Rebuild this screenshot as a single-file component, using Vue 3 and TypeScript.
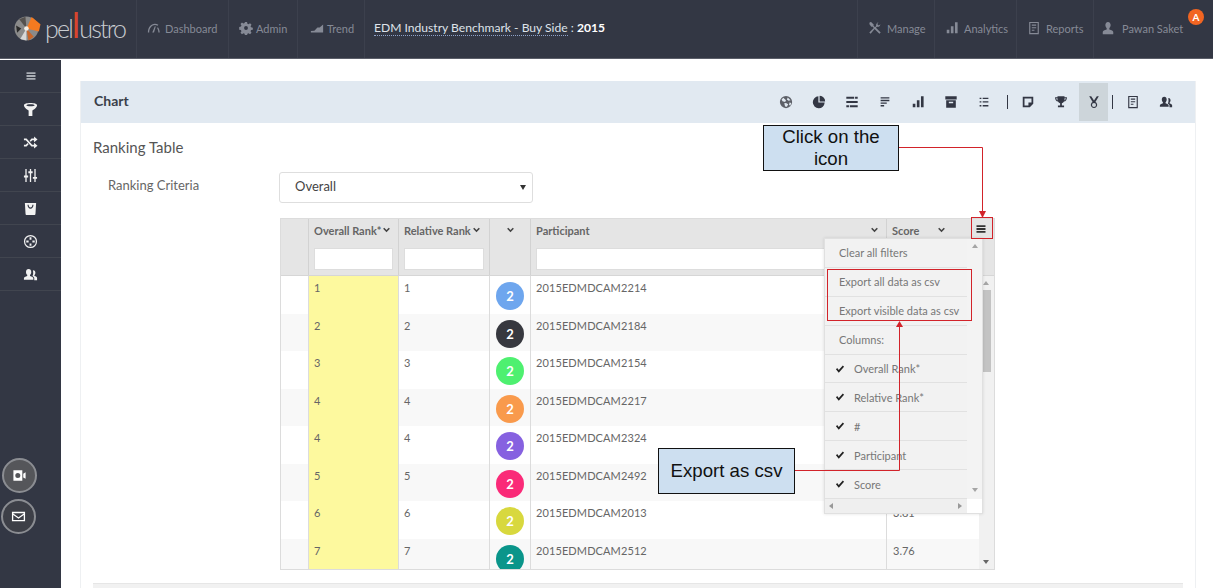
<script setup lang="ts">
const I: Record<string, string> = {
  menu: 'M2 3h12v2.4H2zM2 6.8h12v2.4H2zM2 10.6h12v2.4H2z',
  funnel: 'M1 3.5C1 1.8 4 1 8 1s7 .8 7 2.5c0 2-3 4.6-5 5.6V15H6V9.1C4 8.1 1 5.5 1 3.5zM3.6 3.5c0 .6 2 1.1 4.4 1.1s4.4-.5 4.4-1.1S10.400 2.400 8 2.400 3.600 2.900 3.600 3.500z',
  shuffle: 'M1 3.800h2.800l6 6.700h2V8.300L15.500 11.400l-3.700 3.100v-2.200H9L3 5.600H1zM1 10.500h2l1.800-2 1.200 1.300-2.200 2.500H1zM9 3.800h2.800V1.600l3.700 3.100-3.700 3.100V5.600h-2L8.300 7.300 7.100 6z',
  sliders: 'M2.500 1h1.400v7H5.500v2H3.900v5H2.500v-5H1V8h1.500zM7.300 1h1.400v2.500h1.600v2H8.700V15H7.300V5.500H5.700v-2h1.600zM12.100 1h1.400v8.500H15v2h-1.500V15h-1.400v-3.500h-1.600v-2h1.600z',
  bag: 'M2 2h12l-.7 11.500c0 .8-.5 1.500-1.300 1.500H4c-.8 0-1.300-.7-1.300-1.500zM4.800 4c0 2.400 1.400 4.200 3.200 4.200S11.200 6.400 11.200 4H10c0 1.600-.9 3-2 3S6 5.600 6 4z',
  target: 'M8 1a7 7 0 1 1 0 14A7 7 0 0 1 8 1zM8 2.300a5.700 5.700 0 1 0 0 11.400A5.700 5.700 0 0 0 8 2.300zM7 3.500h2V6H7zM3.500 7H6v2H3.500zM10 7h2.500v2H10zM7 10h2v2.500H7z',
  users: 'M6 2c1.800 0 2.800 1.400 2.800 3.200 0 1.300-.5 2.500-1.300 3.100v1.200c2 .6 3.500 1.300 3.500 2.500v1.500H1V12c0-1.200 1.500-1.900 3.500-2.500V8.300C3.700 7.700 3.200 6.500 3.200 5.200 3.200 3.400 4.200 2 6 2zM11 3.500c1.400 0 2.200 1.200 2.200 2.600 0 1-.4 2-1 2.500v1c1.600.5 2.800 1 2.800 2.100V14h-3v-2c0-1-.8-1.800-2-2.400.8-1 1.200-2.900.6-6z',
  video: 'M1.500 2.500h9.500v11H1.500zM6.200 5.300a2.700 2.700 0 1 0 0 5.400 2.700 2.700 0 0 0 0-5.400zM12 6 14.500 4.500v7L12 10z',
  mail: 'M1 3h14v10H1zM2.400 4.400v.4L8 8.800l5.600-4V4.400zM2.400 6.500v5.100h11.200V6.500L8 10.500z',
  gauge: 'M1 13C1 7.500 4.500 3 9 3c1.500 0 2.800.5 4 1.300l-1 1C11.100 4.800 10 4.500 9 4.500 5.500 4.500 2.500 8.300 2.500 13zM6 13l3-7 1 .4L8 13zM12.500 7c1 1.500 2 3.500 2 6H13c0-2-.7-3.800-1.500-5z',
  gear: 'M6.800 1h2.400l.4 2 1.300.6 1.700-1.100 1.700 1.700-1.100 1.700.6 1.300 2 .4v2.400l-2 .4-.6 1.300 1.100 1.700-1.700 1.700-1.700-1.100-1.300.6-.4 2H6.800l-.4-2-1.300-.6-1.700 1.100-1.700-1.700 1.100-1.700-.6-1.300-2-.4V6.800l2-.4.6-1.300-1.100-1.700 1.700-1.700 1.700 1.100 1.300-.6zM8 5.800a2.200 2.200 0 1 0 0 4.400 2.200 2.200 0 0 0 0-4.400z',
  trend: 'M1 13h14V4l-4 3.500H8.500L5 11 1 11.500z',
  tools: 'M2 1.500l1.500-.5 3 3-.2 1.300 1.700 1.700L9.300 5.700C9 4 10 2 12 1.500l-1.500 2 1.700 1.700 2-1.500c-.3 2.200-2.200 3.500-4 2.800L9 7.700l5.500 5.500-1.500 1.500L7.500 9.200 3 14.500l-1.500-1.500L6.700 8 5 6.300l-1.300.2-2.200-3z',
  bars: 'M2 10h3v4H2zM6.700 6h3v8h-3zM11.400 1.500h3V14h-3z',
  report: 'M2.500 1h11v14h-11zM3.800 2.300v11.400h8.400V2.300zM5.500 4h5v1.400h-5zM5.500 7h5v1.200h-5zM5.500 10h3v1.200h-3z',
  user: 'M8 1c2 0 3 1.500 3 3.600 0 1.500-.6 2.900-1.500 3.600v1.400c2.500.6 4.500 1.500 4.500 3V15H2v-2.400c0-1.500 2-2.400 4.500-3V8.200C5.600 7.500 5 6.100 5 4.600 5 2.500 6 1 8 1z',
  globe: 'M8 1a7 7 0 1 1 0 14A7 7 0 0 1 8 1zM5 3l-2 2 1 2 3 1 1-2zM10 2.800 9 5l2 1.500 2.200-.5zM8 9l-2 .5L7 13l2 .5 1.500-3zM12 8.500l-.5 3 1.500.5 1-3z',
  pie: 'M7.300 1.500v7.200h7.200A6.800 6.800 0 1 1 7.300 1.500zM8.700 1A6 6 0 0 1 15 7.300H8.700z',
  lines: 'M1.500 2h9v2.200h-9zM11.500 2h3v2.200h-3zM1.500 6.900h13v2.200h-13zM1.500 11.800h3v2.200h-3zM5.500 11.800h9v2.200h-9z',
  align: 'M3 2.500h10v1.500H3zM3 5.500h10v1.500H3zM3 8.500h7v1.500H3zM3 11.500h4V13H3z',
  archive: 'M1.500 1.500h13V5h-13zM2.500 6h11v8.500h-11zM5.500 7.800v1.500h5V7.800z',
  list: 'M3 3h2v1.500H3zM6.500 3H13v1.500H6.500zM3 7.200h2v1.500H3zM6.500 7.200H13v1.500H6.500zM3 11.500h2V13H3zM6.500 11.500H13V13H6.500z',
  note: 'M2 2h12v8l-4 4H2zM4 4v8h4.500v-3.500H12V4z',
  trophy: 'M4 1.500h8v1h2.800c0 3-1.300 4.600-3.400 5C10.700 8.700 9.700 9.300 9 9.500V12h2.500v2h-7v-2H7V9.500c-.7-.2-1.700-.8-2.400-2C2.500 7.100 1.200 5.500 1.200 2.500H4zM2.500 3.800c.1 1.200.6 2 1.500 2.400-.1-.8-.1-1.600 0-2.400zM12 3.800c.1.800.1 1.600 0 2.400.9-.4 1.400-1.200 1.500-2.400z',
  medal: 'M2.500 1.500h2.300L8 6.200l3.200-4.700h2.300L9.600 8a3.600 3.600 0 1 1-3.200 0zM8 9.200a2.300 2.300 0 1 0 0 4.600 2.300 2.300 0 0 0 0-4.600z',
  check: 'M1.500 8.500 3.500 6.500 6 9.500 12.500 2.500 14.500 4.500 6 14z',
  chev: 'M2 5l2-2 4 4 4-4 2 2-6 6z'
}

const sideIcons = ['funnel', 'shuffle', 'sliders', 'bag', 'target', 'users']
const toolsA = ['globe', 'pie', 'lines', 'align', 'bars', 'archive', 'list']
const toolsB = ['note', 'trophy', 'medal']
const toolsC = ['report', 'users']

interface Row { overall: number; relative: number; color: string; id: string; score: string }
const rows: Row[] = [
  { overall: 1, relative: 1, color: '#6ea6ee', id: '2015EDMDCAM2214', score: '' },
  { overall: 2, relative: 2, color: '#37383f', id: '2015EDMDCAM2184', score: '' },
  { overall: 3, relative: 3, color: '#4ef070', id: '2015EDMDCAM2154', score: '' },
  { overall: 4, relative: 4, color: '#f99a4c', id: '2015EDMDCAM2217', score: '' },
  { overall: 4, relative: 4, color: '#8661e0', id: '2015EDMDCAM2324', score: '' },
  { overall: 5, relative: 5, color: '#fa2a78', id: '2015EDMDCAM2492', score: '' },
  { overall: 6, relative: 6, color: '#d8d83e', id: '2015EDMDCAM2013', score: '3.81' },
  { overall: 7, relative: 7, color: '#0a958a', id: '2015EDMDCAM2512', score: '3.76' }
]
const columnsList = ['Overall Rank*', 'Relative Rank*', '#', 'Participant', 'Score']
</script>

<template>
  <div class="app">
    <header class="top">
      <div class="logo">
        <svg class="logo-mark" viewBox="0 0 26 24">
          <circle cx="12" cy="12" r="11.500" fill="#8a8a8a" />
          <path d="M12 12 17 1 25.500 8 24 15z" fill="#f47a20" />
          <path d="M12 12 5 3 11 .8z" fill="#55514e" />
          <path d="M12 12 12 23.500 6 22z" fill="#d8d8d8" />
          <path d="M12 12 19 20 14 23.500z" fill="#c9662a" />
          <path d="M2 9l5 3-4 4z" fill="#2a2a2a" />
          <circle cx="12" cy="12" r="2.200" fill="#f4efe6" />
        </svg>
        <span class="logo-text">pel<i class="l-red">l</i>ustro</span>
      </div>
      <nav class="nav">
        <a class="nav-item nav-dash"><svg class="ic13" viewBox="0 0 16 16"><path :d="I.gauge" /></svg>Dashboard</a>
        <a class="nav-item nav-admin"><svg class="ic13" viewBox="0 0 16 16"><path :d="I.gear" /></svg>Admin</a>
        <a class="nav-item nav-trend"><svg class="ic13" viewBox="0 0 16 16"><path :d="I.trend" /></svg>Trend</a>
      </nav>
      <div class="title"><span class="title-name">EDM Industry Benchmark - Buy Side</span> : <b>2015</b></div>
      <nav class="nav nav-right">
        <a class="nav-item nav-r1"><svg class="ic13" viewBox="0 0 16 16"><path :d="I.tools" /></svg>Manage</a>
        <a class="nav-item nav-r2"><svg class="ic13" viewBox="0 0 16 16"><path :d="I.bars" /></svg>Analytics</a>
        <a class="nav-item nav-r3"><svg class="ic13" viewBox="0 0 16 16"><path :d="I.report" /></svg>Reports</a>
        <a class="nav-item nav-r4"><svg class="ic13" viewBox="0 0 16 16"><path :d="I.user" /></svg>Pawan Saket</a>
      </nav>
      <span class="badge">A</span>
    </header>

    <div class="page">
      <aside class="side">
        <div class="side-item side-menu"><svg viewBox="0 0 16 16"><path :d="I.menu" /></svg></div>
        <div v-for="s in sideIcons" :key="s" class="side-item">
          <svg viewBox="0 0 16 16"><path :d="I[s]" fill-rule="evenodd" /></svg>
        </div>
        <div class="side-round">
          <span class="round round-video"><svg viewBox="0 0 16 16"><path :d="I.video" fill-rule="evenodd" /></svg></span>
          <span class="round"><svg viewBox="0 0 16 16"><path :d="I.mail" fill-rule="evenodd" /></svg></span>
        </div>
      </aside>

      <main class="main">
        <section class="card">
          <div class="card-head">
            <h2>Chart</h2>
            <div class="tools">
              <span v-for="t in toolsA" :key="t" class="tool" :class="{ soft: t === 'globe' }"><svg viewBox="0 0 16 16"><path :d="I[t]" fill-rule="evenodd" /></svg></span>
              <span class="tool-sep"></span>
              <span v-for="t in toolsB" :key="t" class="tool" :class="{ active: t === 'medal' }"><svg viewBox="0 0 16 16"><path :d="I[t]" fill-rule="evenodd" /></svg></span>
              <span class="tool-sep tool-sep2"></span>
              <span v-for="t in toolsC" :key="t + 'c'" class="tool"><svg viewBox="0 0 16 16"><path :d="I[t]" fill-rule="evenodd" /></svg></span>
            </div>
          </div>
          <div class="card-body">
            <h3>Ranking Table</h3>
            <div class="criteria">
              <label>Ranking Criteria</label>
              <div class="select">Overall<span class="caret"></span></div>
            </div>

            <div class="grid">
              <div class="g-head">
                <div class="hc"></div>
                <div class="hc"><div class="ht">Overall Rank*<svg class="chev chev-tight" viewBox="0 0 16 16"><path :d="I.chev" /></svg></div><div class="filter"></div></div>
                <div class="hc"><div class="ht">Relative Rank<svg class="chev chev-tight" viewBox="0 0 16 16"><path :d="I.chev" /></svg></div><div class="filter"></div></div>
                <div class="hc hc-center"><div class="ht"><svg class="chev" viewBox="0 0 16 16"><path :d="I.chev" /></svg></div></div>
                <div class="hc"><div class="ht ht-between"><span>Participant</span><svg class="chev" viewBox="0 0 16 16"><path :d="I.chev" /></svg></div><div class="filter"></div></div>
                <div class="hc"><div class="ht ht-score"><span>Score</span><svg class="chev" viewBox="0 0 16 16"><path :d="I.chev" /></svg></div></div>
                <div class="hc-end"></div>
              </div>
              <div class="g-body">
                <div class="g-rows">
                  <div v-for="(r, i) in rows" :key="i" class="row" :class="{ odd: i % 2 === 1 }">
                    <div class="c"></div>
                    <div class="c c-y">{{ r.overall }}</div>
                    <div class="c">{{ r.relative }}</div>
                    <div class="c c-av"><span class="avatar" :style="{ background: r.color }">2</span></div>
                    <div class="c c-id">{{ r.id }}</div>
                    <div class="c c-score">{{ r.score }}</div>
                  </div>
                </div>
                <div class="vbar">
                  <span class="arrow-up"></span>
                  <span class="thumb"></span>
                  <span class="arrow-down"></span>
                </div>
              </div>

              <button class="g-menu-btn" type="button" aria-label="Grid menu"><svg viewBox="0 0 16 16"><path :d="I.menu" /></svg></button>

              <div class="menu">
                <div class="menu-main">
                  <ul class="menu-list">
                    <li>Clear all filters</li>
                    <li>Export all data as csv</li>
                    <li>Export visible data as csv</li>
                    <li>Columns:</li>
                    <li v-for="c in columnsList" :key="c" class="m-col"><svg viewBox="0 0 16 16"><path :d="I.check" /></svg>{{ c }}</li>
                  </ul>
                  <div class="menu-v"><span class="arrow-up"></span><span class="arrow-down"></span></div>
                </div>
                <div class="menu-h"><span class="arrow-left"></span><span class="arrow-right"></span><span class="corner"></span></div>
              </div>
            </div>
            <div class="foot-bar"></div>
          </div>
        </section>
      </main>
    </div>

    <svg class="wires" viewBox="0 0 1213 588">
      <g fill="none" stroke="#d2232a" stroke-width="1">
        <path d="M898.500 147.500H982.500V212" />
        <path d="M795 470.500H899.500V326" />
        <rect x="971.500" y="217.500" width="21" height="21" />
        <rect x="827.500" y="269.500" width="144" height="51" />
      </g>
      <path d="M979 211h7l-3.500 7z" fill="#d2232a" />
      <path d="M896 327h7l-3.500-6z" fill="#d2232a" />
    </svg>
    <div class="callout callout-click">Click on the icon</div>
    <div class="callout callout-export">Export as csv</div>
  </div>
</template>

<style>
html, body { margin: 0; background: #fff; }
</style>

<style scoped>
* { box-sizing: border-box; }
.app {
  position: relative; width: 1213px; height: 588px; overflow: hidden;
  font-family: Lato, "Open Sans", sans-serif; color: #6f6f6f; background: #fff;
  display: flex; flex-direction: column;
}
svg { fill: currentColor; display: block; }

/* header */
.top { height: 59px; flex: none; display: flex; align-items: stretch; background: #333744; border-bottom: 1px solid #5b5e69; position: relative; }
.logo { width: 136px; display: flex; align-items: center; padding-left: 14px; gap: 4px; padding-bottom: 2px; }
.logo-mark { width: 27px; height: 25px; fill: none; flex: none; }
.logo-text { font-size: 25px; font-weight: 300; color: #c9ccd1; letter-spacing: -1.800px; line-height: 1; white-space: nowrap; }
.logo-text i { font-style: normal; }
.l-red { color: #d8452e; font-size: 34px; line-height: 20px; font-weight: 400; margin: 0 1px 0 0; }
.nav { display: flex; align-items: stretch; }
.nav-item { display: flex; align-items: center; gap: 5px; font-size: 11px; color: #868a96; border-left: 1px solid #3c404d; padding: 0 0 2px 10px; white-space: nowrap; }
.ic13 { width: 14px; height: 14px; flex: none; }
.nav-dash { width: 92px; gap: 4px; }
.nav-admin { width: 69px; gap: 3px; }
.nav-trend { width: 67px; padding-left: 12px; gap: 3px; }
.title { padding: 0 0 3px 9px; border-left: 1px solid #3c404d; display: flex; align-items: center; font-size: 12.100px; color: #dfe3ea; white-space: pre; }
.title b { color: #fff; font-weight: 700; }
.title-name { border-bottom: 1px dotted #8fa2c9; line-height: 15px; }
.nav-right { margin-left: auto; padding-right: 30px; }
.nav-r1 { width: 77px; }
.nav-r2 { width: 82px; }
.nav-r3 { width: 77px; }
.nav-r4 { width: 90px; padding-left: 7px; gap: 7px; }
.badge { position: absolute; left: 1188px; top: 9px; width: 16px; height: 16px; border-radius: 50%; background: #f26522; color: #fff; font-size: 10px; font-weight: 700; text-align: center; line-height: 16px; }

.page { flex: 1; display: flex; min-height: 0; margin-top: 1px; }

/* sidebar */
.side { width: 61px; flex: none; background: #333744; display: flex; flex-direction: column; padding-bottom: 54px; }
.side-item { height: 33px; flex: none; display: flex; align-items: center; justify-content: center; border-bottom: 1px solid #41454f; color: #f2f2f2; }
.side-item svg { width: 15px; height: 15px; }
.side-menu { color: #aaaeb5; }
.side-menu svg { width: 12px; height: 12px; }
.side-round { margin-top: auto; padding-left: 1px; display: flex; flex-direction: column; gap: 6px; }
.round { width: 35px; height: 35px; border-radius: 50%; background: #3d3f47; border: 2px solid #8b8d92; display: flex; align-items: center; justify-content: center; color: #fff; }
.round svg { width: 15px; height: 15px; }
.round-video { margin-left: 1px; background: #55565a; }

/* main */
.main { flex: 1; min-width: 0; padding: 21px 17px 0 19px; }
.card { border: 1px solid #eef0f2; border-top: 0; height: 540px; }
.card-head { height: 42px; background: #e1e9f1; display: flex; align-items: center; justify-content: space-between; padding: 0 13px 0 13px; }
.card-head h2 { margin: 0 0 4px; font-size: 14px; font-weight: 700; color: #3b3f4a; }
.tools { display: flex; align-items: center; height: 42px; color: #333744; }
.tool { width: 33px; height: 38px; display: flex; align-items: center; justify-content: center; }
.tool svg { width: 14px; height: 14px; }
.tool.soft { color: #5d6068; }
.tool.active { background: #cdd5da; width: 29px; margin: 0 2px; }
.tool-sep { width: 1px; height: 14px; background: #333744; margin: 0 3px 0 7px; }
.tool-sep2 { margin: 0 3px 0 2px; }
.card-body { padding: 14px 12px 0; }
.card-body h3 { margin: 0; font-size: 15px; font-weight: 400; line-height: 20px; color: #555; }
.criteria { display: flex; align-items: center; margin-top: 15px; height: 31px; }
.criteria label { width: 186px; padding: 0 0 5px 15px; font-size: 13px; color: #666; flex: none; }
.select { width: 254px; height: 31px; border: 1px solid #dedede; border-radius: 3px; padding-left: 15px; font-size: 13px; line-height: 27px; color: #444; position: relative; }
.caret { position: absolute; right: 6px; top: 12px; border: 3.500px solid transparent; border-top: 5px solid #333; border-bottom: 0; }

/* grid */
.grid { position: relative; margin: 15px 0 0 187px; width: 715px; height: 352px; border: 1px solid #dcdcdc; }
.g-head { height: 57px; display: grid; grid-template-columns: 28px 90px 91px 41px 356px 1fr 22px; background: #e5e5e5; border-bottom: 1px solid #d6d6d6; }
.hc { border-right: 1px solid #d2d2d2; padding: 0 5px; min-width: 0; }
.hc-center { padding: 0; }
.hc-end { background: #e5e5e5; }
.ht { height: 22px; display: flex; align-items: center; font-size: 11px; font-weight: 700; color: #666; white-space: nowrap; }
.hc-center .ht { justify-content: center; }
.ht-between { justify-content: space-between; padding-right: 2px; }
.ht-score { gap: 18px; padding-left: 0; }
.chev { width: 9px; height: 9px; color: #444; flex: none; }
.chev-tight { margin-left: 1px; }
.filter { height: 22px; background: #fff; border: 1px solid #ddd; margin-top: 7px; }
.g-body { display: flex; height: 293px; overflow: hidden; }
.g-rows { flex: 1; min-width: 0; }
.row { display: grid; grid-template-columns: 28px 90px 91px 41px 356px 1fr; height: 37.500px; background: #fff; }
.row.odd { background: #f8f8f8; }
.c { border-right: 1px solid #dcdcdc; padding: 5px 0 0 5px; font-size: 11px; line-height: 14px; color: #666; overflow: hidden; }
.c-y { background: #fdf99e; }
.c-av { padding: 6px 0 0 6px; }
.c-id { letter-spacing: .1px; }
.c-score { border-right: 0; padding-left: 6px; }
.avatar { display: block; width: 28px; height: 28px; border-radius: 50%; color: #fff; font-size: 13px; font-weight: 700; line-height: 28px; text-align: center; }
.vbar { width: 15px; flex: none; background: #f1f1f1; position: relative; }
.thumb { position: absolute; left: 3px; top: 14px; width: 9px; height: 82px; background: #c3c3c3; }
.vbar .arrow-up { position: absolute; left: 4px; top: 5px; }
.vbar .arrow-down { position: absolute; left: 4px; bottom: 5px; }
.arrow-up { border: 3.500px solid transparent; border-bottom: 4px solid #a5a5a5; border-top: 0; }
.arrow-down { border: 3.500px solid transparent; border-top: 4px solid #666; border-bottom: 0; }
.arrow-left { border: 3.500px solid transparent; border-right: 4px solid #999; border-left: 0; }
.arrow-right { border: 3.500px solid transparent; border-left: 4px solid #999; border-right: 0; }
.g-menu-btn { position: absolute; left: 694px; top: 4px; width: 12px; height: 12px; padding: 0; border: 0; background: none; color: #333; }

/* menu */
.menu { position: absolute; left: 543px; top: 19px; width: 159px; height: 276px; background: #f2f2f2; border: 1px solid #e0e0e0; box-shadow: 0 0 3px rgba(0, 0, 0, .12); display: flex; flex-direction: column; }
.menu-main { flex: 1; display: flex; min-height: 0; }
.menu-list { flex: 1; min-width: 0; margin: 0; padding: 0; list-style: none; overflow: hidden; }
.menu-list li { height: 28.900px; display: flex; align-items: center; padding-left: 14px; font-size: 11px; color: #777; border-bottom: 1px solid #e1e1e1; white-space: nowrap; }
.menu-list li.m-col { padding-left: 10px; }
.m-col svg { width: 10px; height: 10px; color: #222; margin-right: 9px; flex: none; }
.menu-v { width: 15px; flex: none; background: #f3f3f3; display: flex; flex-direction: column; align-items: center; justify-content: space-between; padding: 5px 0 7px; }
.menu-v .arrow-up, .menu-v .arrow-down { display: block; }
.menu-v .arrow-down { border-top-color: #a5a5a5; }
.menu-h { height: 14px; flex: none; background: #efefef; display: flex; align-items: center; justify-content: space-between; padding: 0 20px 0 4px; position: relative; }
.corner { position: absolute; right: 0; top: 0; width: 15px; height: 14px; background: #fff; }

.foot-bar { height: 10px; margin: 13px 0 0; background: #f1f1f1; border-top: 1px solid #e6e6e6; }

/* annotations */
.wires { position: absolute; left: 0; top: 0; width: 1213px; height: 588px; fill: none; pointer-events: none; }
.callout { position: absolute; background: #cddff0; border: 1px solid #111; color: #111; font-family: "Liberation Sans", Arial, sans-serif; font-size: 18.670px; line-height: 22px; text-align: center; display: flex; align-items: center; justify-content: center; }
.callout-click { left: 763px; top: 125px; width: 136px; height: 46px; padding: 0 14px; }
.callout-export { left: 658px; top: 448px; width: 137px; height: 46px; }
</style>
